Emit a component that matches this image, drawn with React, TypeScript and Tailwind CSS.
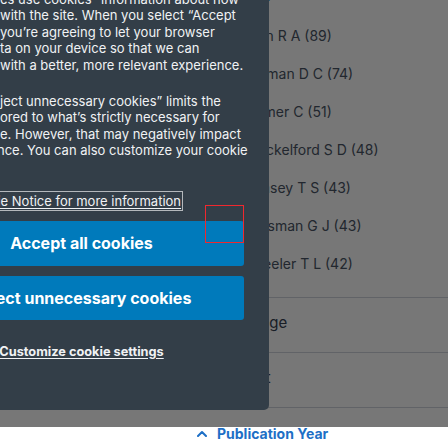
import React from 'react'

type Facet = { label: string; open?: boolean }

const creators = [
  'Allen R A (89)',
  'Bauman D C (74)',
  'Kramer C (51)',
  'Shackelford S D (48)',
  'Ramsey T S (43)',
  'Hausman G J (43)',
  'Wheeler T L (42)',
]

const collapsed: Facet[] = [{ label: 'Language' }, { label: 'Subject' }]

const introLines = [
  'es use cookies” information about how',
  'with the site. When you select “Accept',
  'you’re agreeing to let your browser',
  'ta on your device so that we can',
  'with a better, more relevant experience.',
]

const rejectLines = [
  'ject unnecessary cookies” limits the',
  'ored to what’s strictly necessary for',
  'e. However, that may negatively impact',
  'nce. You can also customize your cookie',
]

function Chevron({ up, className }: { up?: boolean; className?: string }) {
  return (
    <svg width="10" height="7" viewBox="0 0 10 7" fill="none" className={className}>
      <polyline
        points={up ? '1,6 5,2 9,6' : '1,1 5,5 9,1'}
        stroke="currentColor"
        strokeWidth="2"
        strokeLinecap="round"
        strokeLinejoin="round"
      />
    </svg>
  )
}

/**
 * Search results page behind a cookie consent banner.
 */
export default function App() {
  return (
    <div className="relative h-[448px] w-[448px] overflow-hidden bg-white font-['Inter',sans-serif]">
      {/* facet sidebar */}
      <div className="-mt-[14px] pl-[197px]">
        <div className="flex h-[20px] items-center gap-[10px] text-[15px] font-bold text-[#1d6fc6]">
          <Chevron up />
          <span>Creator</span>
        </div>
        <ul className="mt-[10px] pl-[44px]">
          {creators.map((c) => (
            <li key={c} className="flex h-[38px] items-center text-[14px] text-gray-600">
              {c}
            </li>
          ))}
        </ul>
        <div className="mt-[15px] border-b border-gray-300">
          {collapsed.map((f) => (
            <div
              key={f.label}
              className="flex h-[55px] items-center gap-[10px] border-t border-gray-300 pb-[4px] text-[15px] text-gray-700"
            >
              <Chevron className="text-gray-500" />
              <span>{f.label}</span>
            </div>
          ))}
        </div>
        <div className="mt-[15px] flex h-[20px] items-center gap-[10px] text-[14px] font-bold text-[#1d6fc6]">
          <Chevron up />
          <span>Publication Year</span>
        </div>
      </div>

      {/* modal overlay */}
      <div className="absolute inset-x-0 top-0 h-[427px] bg-black/[0.533]" />

      {/* cookie banner */}
      <div className="absolute bottom-[38px] left-0 w-[269px] overflow-hidden rounded-br-[5px] bg-[#333e48] pb-[50px] pr-[25px] pt-[30px] text-[13px] leading-[16.5px] text-[#f0f2f4]">
        <p className="whitespace-nowrap">
          {introLines.map((l) => (
            <span key={l} className="block">
              {l}
            </span>
          ))}
        </p>
        <p className="mt-[19.5px] whitespace-nowrap">
          {rejectLines.map((l, i) => (
            <span key={l} className={i === 3 ? 'block -ml-[3px]' : 'block'}>
              {l}
            </span>
          ))}
        </p>
        <div className="mt-[32.5px] h-[20px]">
          <a className="-ml-[88px] inline-block whitespace-nowrap border border-[#b4b8bc] px-[1px] leading-[18px] underline underline-offset-2">
            See our Cookie Notice for more information
          </a>
        </div>
        <button className="-ml-[81px] mt-[9.5px] block h-[45px] w-[325px] rounded-[3px] bg-[#007abb] text-[16px] font-bold text-white">
          Accept all cookies
        </button>
        <button className="-ml-[81px] mt-[10px] block h-[44.5px] w-[325px] rounded-[3px] bg-[#007abb] text-[16px] font-bold text-white">
          Reject unnecessary cookies
        </button>
        <div className="-ml-[81px] mt-[23.5px] w-[325px] text-center text-[12.75px]">
          <a className="font-bold underline underline-offset-2">Customize cookie settings</a>
        </div>
      </div>

      {/* focus marker */}
      <div className="absolute left-[205px] top-[205px] h-[38px] w-[39px] border border-[#f0282e]" />
    </div>
  )
}
